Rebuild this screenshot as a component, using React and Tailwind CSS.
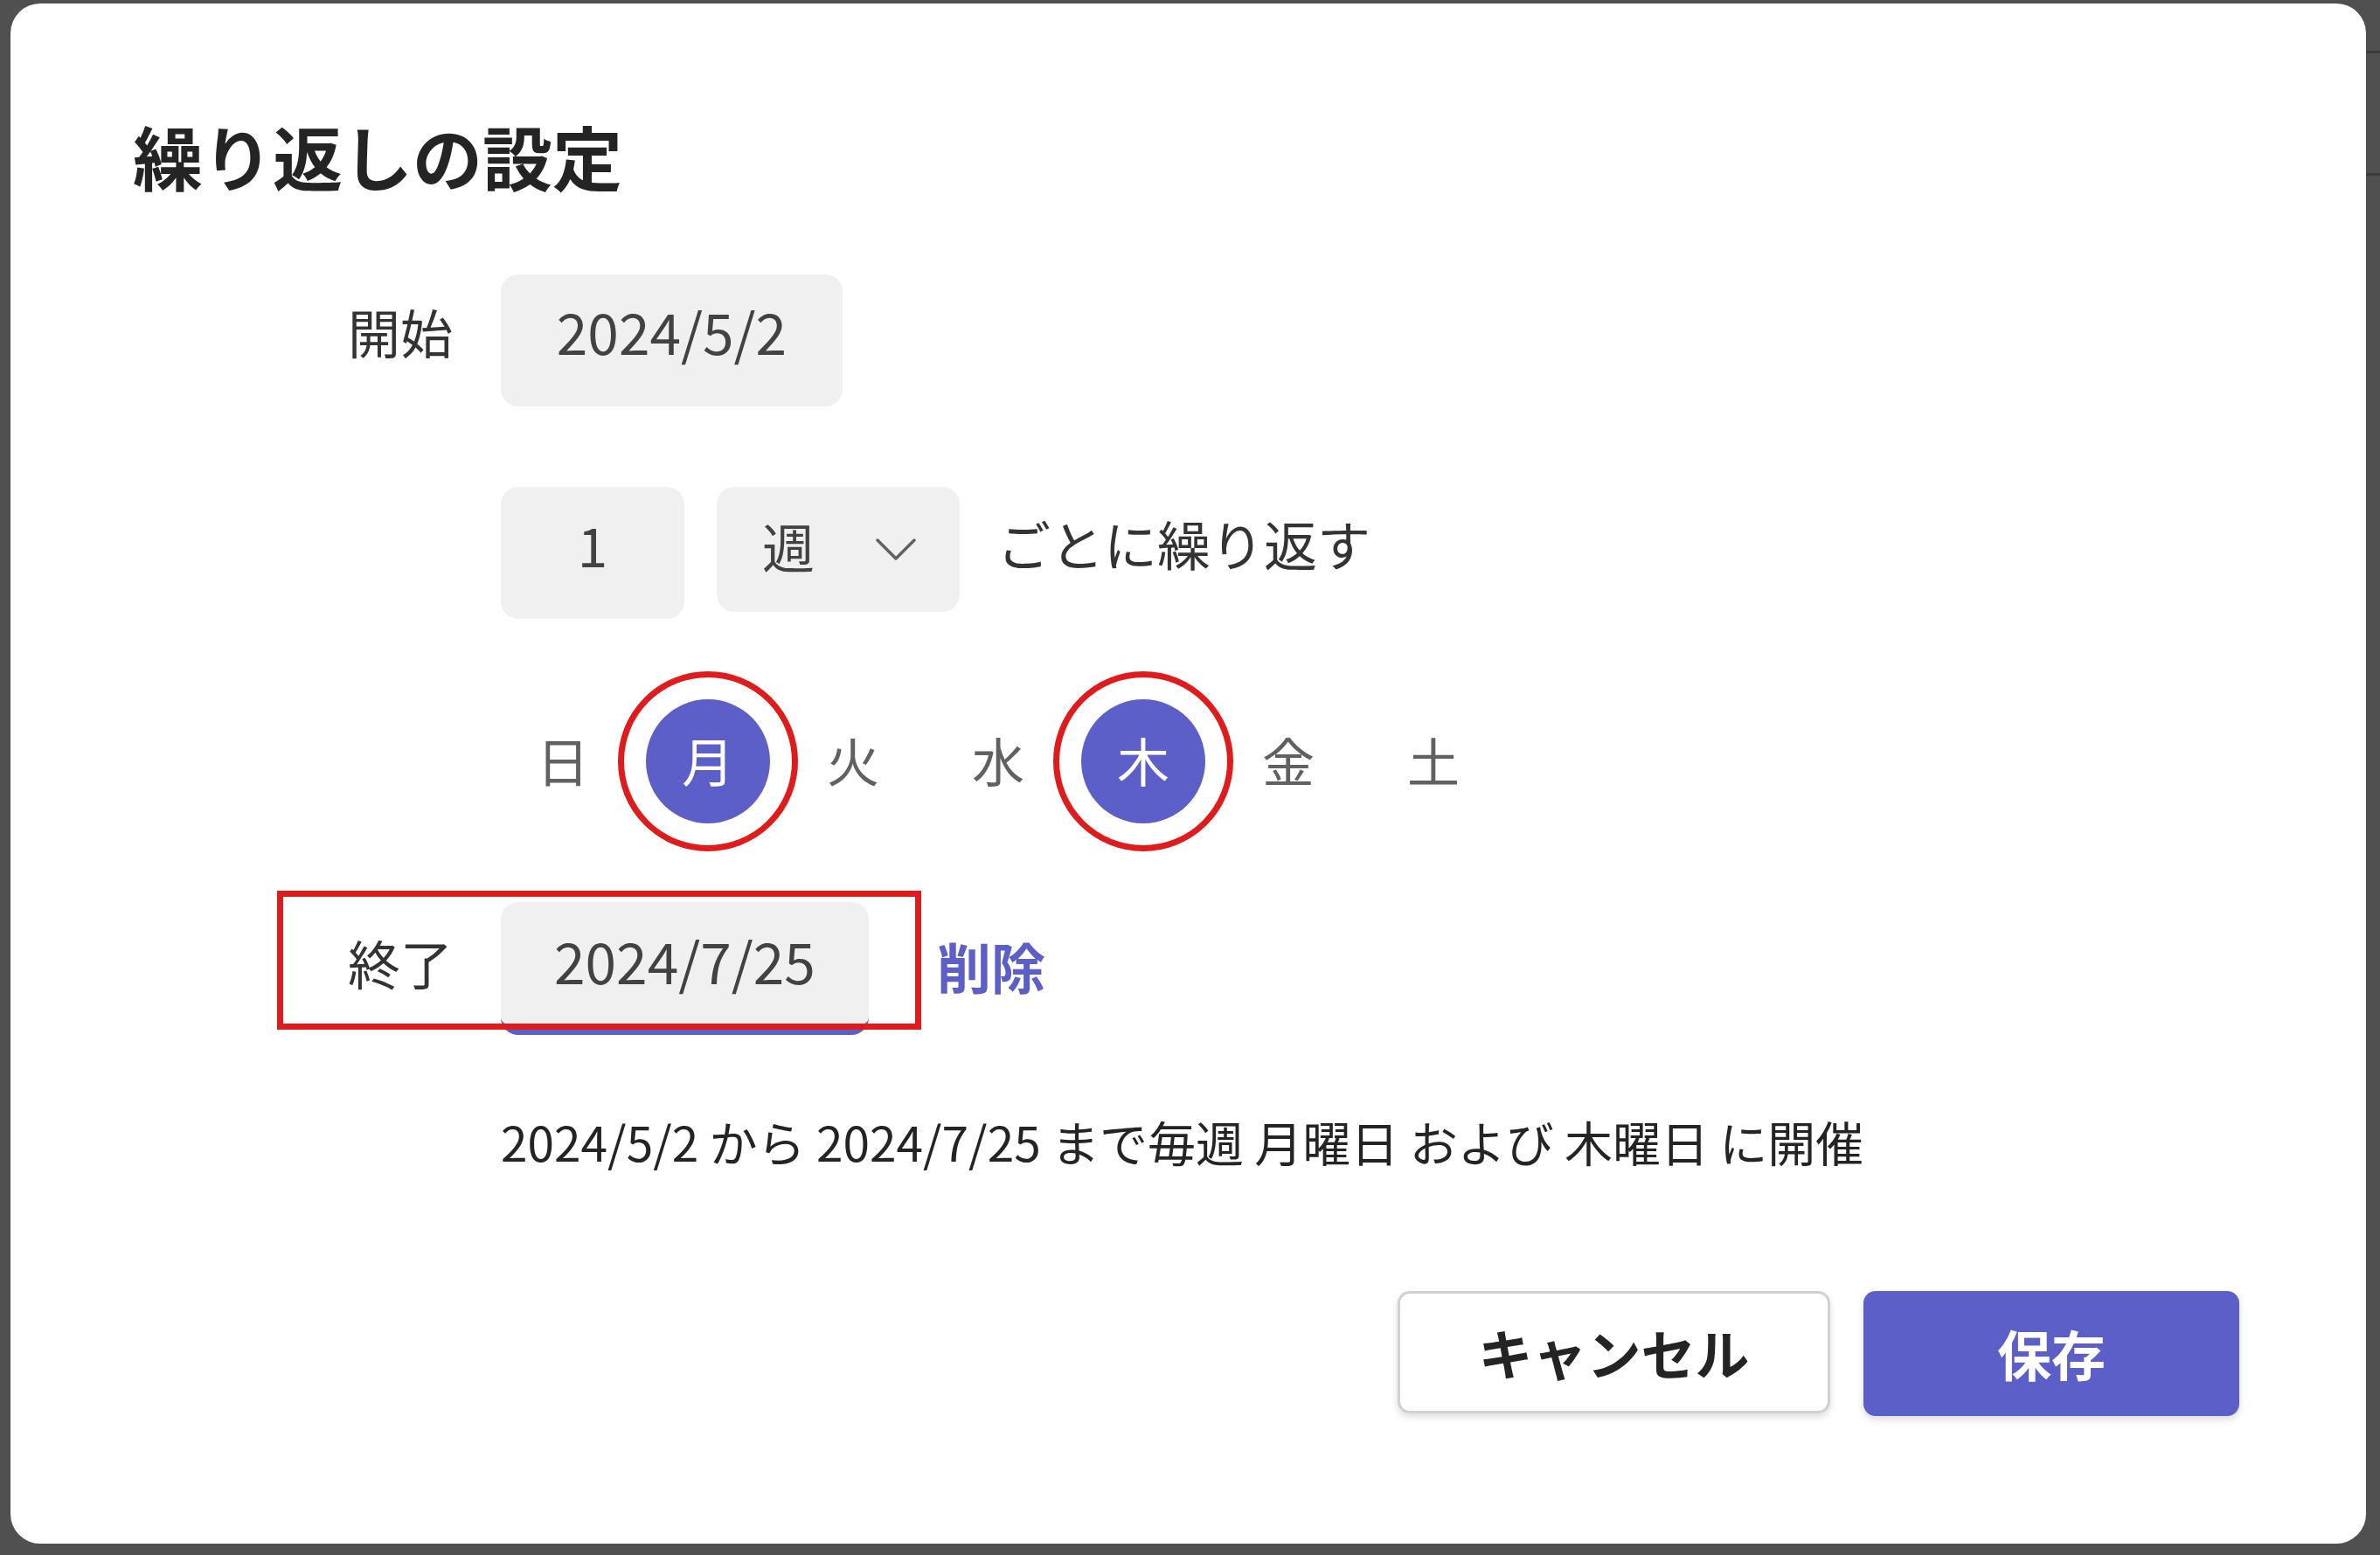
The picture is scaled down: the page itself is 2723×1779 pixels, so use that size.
import React from "react";

const days = [
  { label: "日", on: false },
  { label: "月", on: true },
  { label: "火", on: false },
  { label: "水", on: false },
  { label: "木", on: true },
  { label: "金", on: false },
  { label: "土", on: false },
];

function Chevron() {
  return (
    <svg width="46" height="26" viewBox="0 0 46 26" fill="none">
      <path d="M2 2 L23 23 L44 2" stroke="#616161" strokeWidth="3.5" strokeLinecap="round" strokeLinejoin="round" />
    </svg>
  );
}

export default function App() {
  return (
    <div className="relative w-[2723px] h-[1779px] overflow-hidden bg-[#505050] pl-[12px] pt-[4px] font-['Noto_Sans_CJK_JP','Noto_Sans',sans-serif]">
      {/* window behind the dialog */}
      <div className="absolute right-0 top-[58px] w-[16px] h-[3px] bg-[#3c3c3c]" />
      <div className="absolute right-0 top-[198px] w-[16px] h-[3px] bg-[#3c3c3c]" />

      <div className="relative flex flex-col w-[2695px] h-[1762px] bg-white rounded-[34px] pl-[140px] pr-[145px] pt-[123px]">
        <h1 className="text-[80px] leading-[100px] font-bold text-[#242424]">
          繰り返しの設定
        </h1>

        <div className="mt-[87px] flex flex-col">
          {/* start */}
          <div className="flex items-center">
            <div className="w-[366px] mb-[22px] text-right text-[60px] leading-none text-[#333333]">
              開始
            </div>
            <div className="ml-[55px] w-[391px] h-[151px] pb-[24px] bg-[#f0f0f0] rounded-[20px] flex items-center justify-center text-[64px] leading-none text-[#424242]">
              2024/5/2
            </div>
          </div>

          {/* interval */}
          <div className="mt-[92px] pl-[421px] flex items-start">
            <div className="w-[210px] h-[151px] pb-[22px] bg-[#f0f0f0] rounded-[20px] flex items-center justify-center text-[62px] leading-none text-[#424242]">
              1
            </div>
            <div className="ml-[37px] w-[278px] h-[143px] bg-[#f0f0f0] rounded-[20px] flex items-center justify-between pl-[52px] pr-[50px]">
              <span className="text-[60px] leading-none mb-[10px] text-[#424242]">週</span>
              <Chevron />
            </div>
            <div className="ml-[43px] h-[143px] pb-[14px] flex items-center text-[61px] leading-none text-[#333333]">
              ごとに繰り返す
            </div>
          </div>

          {/* weekdays */}
          <div className="mt-[92px] pl-[421px] flex gap-[24px]">
            {days.map((d) => (
              <div
                key={d.label}
                className={
                  d.on
                    ? "relative w-[142px] h-[142px] pb-[4px] rounded-full bg-[#5b5fc7] text-white flex items-center justify-center text-[60px] leading-none"
                    : "relative w-[142px] h-[142px] pb-[4px] rounded-full text-[#616161] flex items-center justify-center text-[60px] leading-none"
                }
              >
                {d.label}
                {d.on && (
                  <div className="absolute -inset-[32px] rounded-full border-[7px] border-[#e01b1b]" />
                )}
              </div>
            ))}
          </div>

          {/* end */}
          <div className="relative mt-[90px] flex items-center">
            <div className="w-[366px] mb-[14px] text-right text-[60px] leading-none text-[#333333]">
              終了
            </div>
            <div className="ml-[55px] w-[421px] h-[152px] pb-[12px] bg-[#f0f0f0] rounded-[20px] border-b-[9px] border-[#5b5fc7] flex items-center justify-center text-[64px] leading-none text-[#424242]">
              2024/7/25
            </div>
            <button className="ml-[78px] mb-[6px] text-[62px] leading-none font-bold text-[#5b5fc7]">
              削除
            </button>
            <div className="absolute left-[165px] -top-[13px] w-[737px] h-[159px] border-[7px] border-[#e01b1b]" />
          </div>

          {/* summary */}
          <div className="mt-[85px] pl-[421px] text-[55px] leading-[73px] text-[#242424] whitespace-nowrap">
            2024/5/2 から 2024/7/25 まで毎週 月曜日 および 木曜日 に開催
          </div>
        </div>

        <div className="mt-[135px] flex justify-end">
          <button className="w-[495px] h-[140px] bg-white border-[3px] border-[#d1d1d1] rounded-[14px] shadow-[0_4px_8px_rgba(0,0,0,0.14)] text-[62px] font-bold text-[#242424]">
            キャンセル
          </button>
          <button className="ml-[38px] w-[430px] h-[143px] bg-[#5b5fc7] rounded-[14px] shadow-[0_4px_8px_rgba(0,0,0,0.14)] text-[62px] font-bold text-white">
            保存
          </button>
        </div>
      </div>
    </div>
  );
}
